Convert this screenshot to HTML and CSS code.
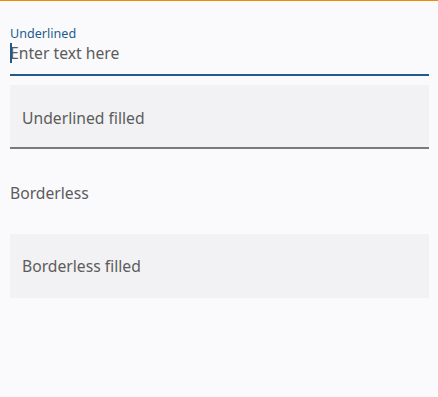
FILE: index.html
```html
<!DOCTYPE html>
<html>
<head>
<meta charset="utf-8">
<link rel="stylesheet" href="styles.css">
</head>
<body>
<div class="page">
  <div class="field underlined focused">
    <label class="label">Underlined</label>
    <div class="input"><span class="caret"></span><span class="placeholder">Enter text here</span></div>
  </div>
  <div class="field underlined-filled">
    <span class="placeholder">Underlined filled</span>
  </div>
  <div class="field borderless">
    <span class="placeholder">Borderless</span>
  </div>
  <div class="field borderless-filled">
    <span class="placeholder">Borderless filled</span>
  </div>
</div>
</body>
</html>
```
FILE: styles.css
```css
html, body {
  margin: 0;
  padding: 0;
  height: 100%;
}
body {
  background: #fafafd;
  border-top: 1px solid #f08c00;
  box-sizing: border-box;
  font-family: "Noto Sans", "Open Sans", sans-serif;
}
.page {
  padding: 0 9px 0 10px;
  display: flex;
  flex-direction: column;
}
.field {
  display: flex;
  flex-direction: column;
}
.placeholder {
  font-size: 15.7px;
  color: #5c5c5c;
  line-height: 20px;
}
.underlined {
  margin-top: 25px;
  border-bottom: 2px solid #1f5b8c;
  padding-bottom: 10px;
}
.label {
  font-size: 12.6px;
  line-height: 16px;
  color: #1f5b8c;
}
.input {
  display: flex;
  align-items: center;
  height: 22px;
}
.caret {
  width: 2px;
  height: 20px;
  background: #1f5b8c;
  margin-right: -2px;
}
.underlined-filled {
  margin-top: 9px;
  height: 64px;
  box-sizing: border-box;
  padding-top: 3px;
  background: #f2f2f4;
  border-bottom: 2px solid #7a7a7a;
  padding-left: 12px;
  justify-content: center;
}
.borderless {
  margin-top: 34px;
  height: 20px;
  justify-content: center;
}
.borderless-filled {
  margin-top: 31px;
  height: 64px;
  background: #f2f2f4;
  padding-left: 12px;
  justify-content: center;
}
```
